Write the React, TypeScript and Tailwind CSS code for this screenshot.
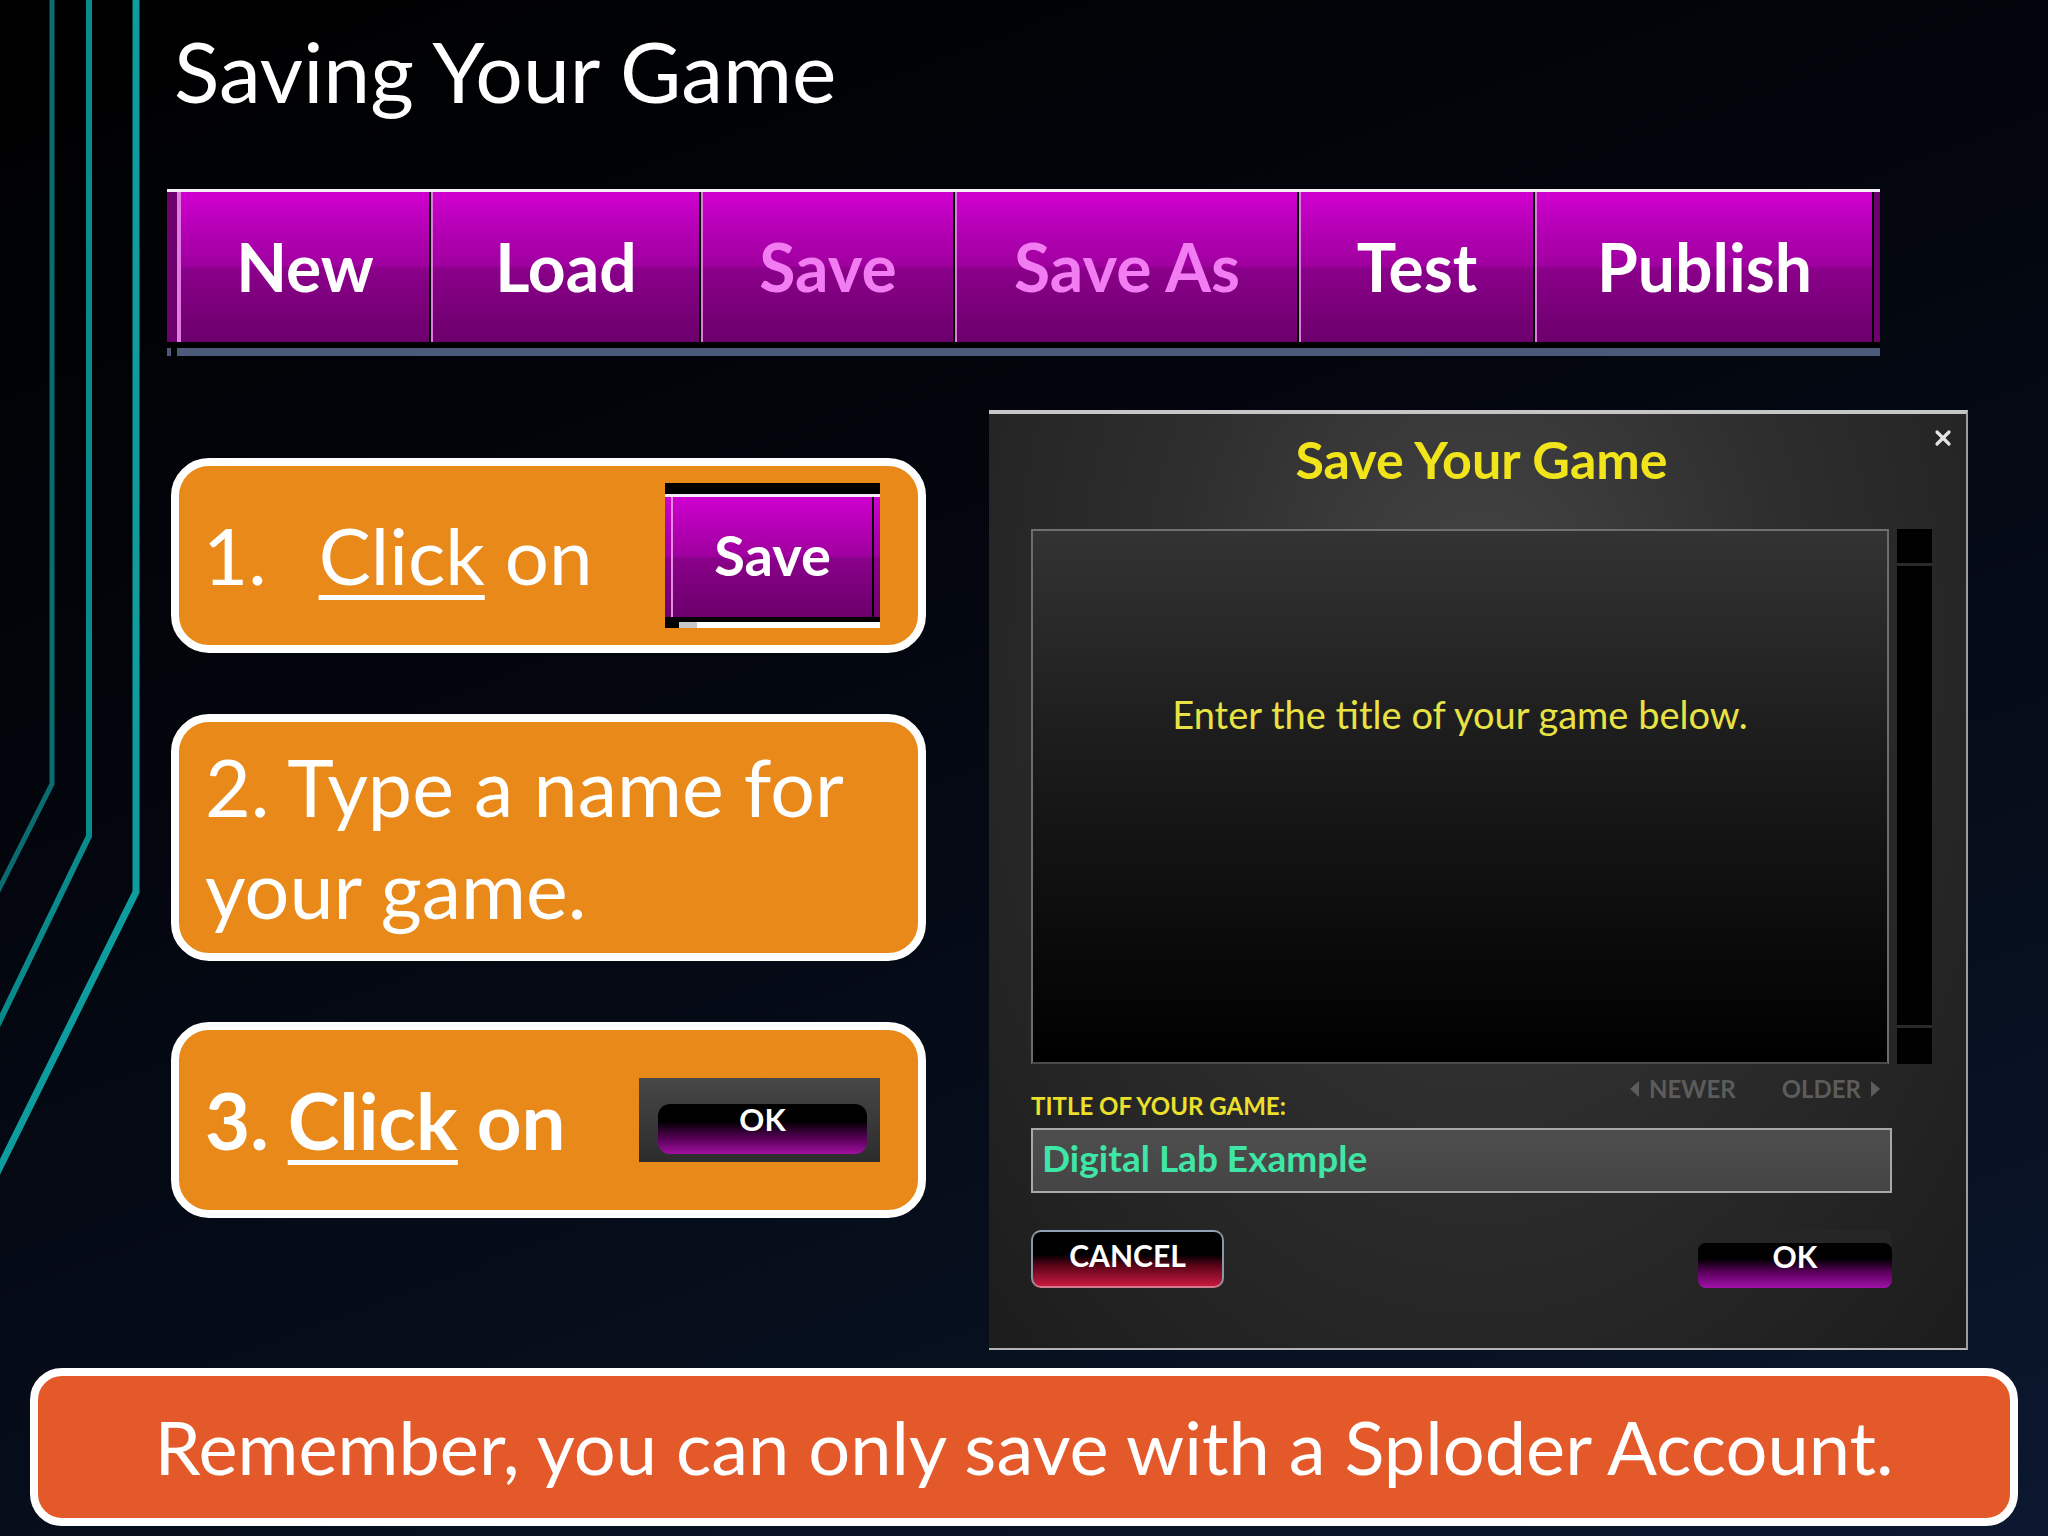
import { X } from 'lucide-react'

const TOOLBAR = [
  { label: 'New', width: 'w-[252px]', dim: false },
  { label: 'Load', width: 'w-[270px]', dim: false },
  { label: 'Save', width: 'w-[254px]', dim: true },
  { label: 'Save As', width: 'w-[344px]', dim: true },
  { label: 'Test', width: 'w-[236px]', dim: false },
  { label: 'Publish', width: 'w-[339px]', dim: false },
]

const MAGENTA =
  'bg-[linear-gradient(180deg,#d000d0_0%,#b000b0_30%,#a000a0_49%,#8a008a_51%,#6c006c_100%)]'

const SideLines = () => (
  <svg className="absolute left-0 top-0" width="160" height="1536" viewBox="0 0 160 1536" fill="none">
    <polyline points="52,0 52,784 -10,907" stroke="#0a6c6e" strokeWidth="5" />
    <polyline points="89,0 89,836 -10,1041" stroke="#0b8a8b" strokeWidth="6" />
    <polyline points="136,0 136,892 -10,1187" stroke="#0e9d9e" strokeWidth="7" />
  </svg>
)

const Toolbar = () => (
  <div className="ml-[167px] mt-[76px] flex w-[1713px] flex-col">
    <div className="h-[3px] bg-[#f4f0f4]" />
    <div className="flex h-[150px]">
      <div className="w-[12px] border-r-2 border-r-[#e27ee2] bg-[#6e006e]" />
      {TOOLBAR.map((item) => (
        <div
          key={item.label}
          className={`${item.width} ${MAGENTA} flex items-center justify-center border-l-2 border-r-2 border-l-[#e07ae0] border-r-black`}
        >
          <span
            className={`text-[66px] font-bold leading-none ${item.dim ? 'text-[#f27cf2]' : 'text-white'}`}
          >
            {item.label}
          </span>
        </div>
      ))}
      <div className="w-[6px] bg-[#6e006e]" />
    </div>
    <div className="h-[6px] bg-black" />
    <div className="flex h-[8px]">
      <div className="w-[4px] bg-[#4b5a78]" />
      <div className="w-[6px]" />
      <div className="flex-1 bg-[#4b5a78]" />
    </div>
  </div>
)

const MiniSave = () => (
  <div className="flex h-[145px] w-[215px] flex-col">
    <div className="h-[11px] bg-black" />
    <div className="h-[3px] bg-[#f6e8f6]" />
    <div className={`flex-1 px-[6px] ${MAGENTA}`}>
      <div className="flex h-full items-center justify-center border-l-2 border-r-2 border-l-[#e58ae5] border-r-black pb-[4px]">
        <span className="text-[56px] font-bold leading-none text-white">Save</span>
      </div>
    </div>
    <div className="h-[5px] bg-black" />
    <div className="flex h-[6px] bg-white">
      <div className="w-[14px] bg-black" />
      <div className="w-[18px] bg-[#c8c8c8]" />
    </div>
  </div>
)

const MiniOk = () => (
  <div className="flex h-[84px] w-[241px] bg-[linear-gradient(180deg,#474747_0%,#2c2c2c_100%)] pb-[8px] pl-[19px] pr-[13px] pt-[26px]">
    <div className="flex flex-1 justify-center rounded-[12px] bg-[linear-gradient(180deg,#000_0%,#000_35%,#5a005a_70%,#a010a0_100%)]">
      <span className="text-[31px] font-bold leading-none text-white">OK</span>
    </div>
  </div>
)

const NavTriangle = ({ dir }: { dir: 'left' | 'right' }) => (
  <svg width="9" height="16" viewBox="0 0 9 16">
    <polygon points={dir === 'left' ? '9,0 9,16 0,8' : '0,0 0,16 9,8'} fill="#5c5c5c" />
  </svg>
)

const SaveDialog = () => (
  <div className="relative ml-[63px] flex h-[940px] w-[979px] flex-col border-b-2 border-r-2 border-t-4 border-b-[#b4b4b4] border-r-[#9c9c9c] border-t-[#c6c6c6] bg-[radial-gradient(ellipse_at_50%_25%,#464646_0%,#2e2e2e_45%,#1c1c1c_100%)] pl-[42px] pr-[34px]">
    <button className="absolute right-[11px] top-[12px] text-[#e4e4e4]">
      <X size={24} strokeWidth={3.2} />
    </button>

    <h2 className="mt-[19px] text-center text-[52px] font-bold leading-none text-[#f2e41a]">
      Save Your Game
    </h2>

    <div className="mt-[44px] flex h-[535px] gap-[8px]">
      <div className="flex-1 border-2 border-b-[#4a4a4a] border-l-[#6c6c6c] border-r-[#6c6c6c] border-t-[#707070] bg-[linear-gradient(180deg,#333333_0%,#1c1c1c_40%,#0e0e0e_70%,#000000_100%)] pt-[164px] text-center text-[38px] leading-none text-[#e8e244]">
        Enter the title of your game below.
      </div>
      <div className="flex w-[35px] flex-col bg-black">
        <div className="h-[34px]" />
        <div className="h-[3px] bg-[#2a2a2a]" />
        <div className="flex-1" />
        <div className="h-[3px] bg-[#2a2a2a]" />
        <div className="h-[36px]" />
      </div>
    </div>

    <div className="flex h-[64px] w-[861px] justify-between">
      <span className="mt-[30px] text-[24px] font-bold leading-none text-[#ece02c]">
        TITLE OF YOUR GAME:
      </span>
      <div className="mr-[12px] mt-[13px] flex h-[24px] items-center gap-[46px] text-[24px] font-bold leading-none text-[#5c5c5c]">
        <span className="flex items-center gap-[10px]">
          <NavTriangle dir="left" />
          NEWER
        </span>
        <span className="flex items-center gap-[10px]">
          OLDER
          <NavTriangle dir="right" />
        </span>
      </div>
    </div>

    <div className="flex h-[65px] w-[861px] items-center border-2 border-[#a8a8a8] bg-[linear-gradient(180deg,#4e4e4e_0%,#444444_100%)] pb-[6px] pl-[9px]">
      <span className="text-[37px] font-bold leading-none text-[#3fe6a6]">Digital Lab Example</span>
    </div>

    <div className="mt-[37px] flex h-[58px] w-[861px] items-end justify-between">
      <button className="flex h-[58px] w-[193px] items-center justify-center rounded-[10px] border-2 border-b-[#d27a90] border-l-[#8a97a8] border-r-[#8a97a8] border-t-[#8fa2b6] bg-[linear-gradient(180deg,#000_0%,#000_42%,#5a0418_62%,#c8183e_100%)] pb-[8px]">
        <span className="text-[30px] font-bold leading-none text-white">CANCEL</span>
      </button>
      <div className="flex h-[58px] w-[194px] items-end rounded-[8px] bg-[#262626]">
        <button className="flex h-[45px] w-full items-start justify-center rounded-[8px] bg-[linear-gradient(180deg,#000_0%,#000_35%,#5c005c_65%,#a012a8_100%)]">
          <span className="-mt-[2px] text-[30px] font-bold leading-none text-white">OK</span>
        </button>
      </div>
    </div>
  </div>
)

const App = () => {
  return (
    <div className="relative h-[1536px] w-[2048px] overflow-hidden bg-[linear-gradient(160deg,#000000_0%,#03060e_40%,#07101f_75%,#0c1830_100%)] font-[Lato,'Liberation_Sans',sans-serif]">
      <SideLines />

      <div className="relative flex flex-col">
        {/* Heading */}
        <h1 className="ml-[174px] pt-[29px] text-[84px] font-normal leading-none text-white">
          Saving Your Game
        </h1>

        {/* Editor toolbar */}
        <Toolbar />

        {/* Steps + dialog */}
        <div className="ml-[171px] mt-[54px] flex">
          <div className="flex w-[755px] flex-col pt-[48px]">
            <div className="flex h-[195px] items-center justify-between rounded-[38px] border-[8px] border-white bg-[#e8891a] pl-[24px] pr-[38px]">
              <span className="text-[78px] text-white">
                <span className="mr-[52px]">1.</span>
                <span className="underline decoration-[5px] underline-offset-[10px]">Click</span> on
              </span>
              <MiniSave />
            </div>

            <div className="mt-[61px] flex h-[247px] items-center rounded-[38px] border-[8px] border-white bg-[#e8891a] pl-[26px]">
              <p className="text-[79px] leading-[102px] text-white">
                2. Type a name for
                <br />
                your game.
              </p>
            </div>

            <div className="mt-[61px] flex h-[196px] items-center justify-between rounded-[38px] border-[8px] border-white bg-[#e8891a] pl-[26px] pr-[38px]">
              <span className="text-[78px] font-bold text-white">
                3. <span className="underline decoration-[5px] underline-offset-[10px]">Click</span> on
              </span>
              <MiniOk />
            </div>
          </div>

          <SaveDialog />
        </div>

        {/* Reminder */}
        <div className="ml-[30px] mt-[18px] flex h-[158px] w-[1988px] items-center justify-center rounded-[32px] border-[8px] border-white bg-[#e4592a]">
          <span className="text-[74px] leading-none text-white">
            Remember, you can only save with a Sploder Account.
          </span>
        </div>
      </div>
    </div>
  )
}

export default App
